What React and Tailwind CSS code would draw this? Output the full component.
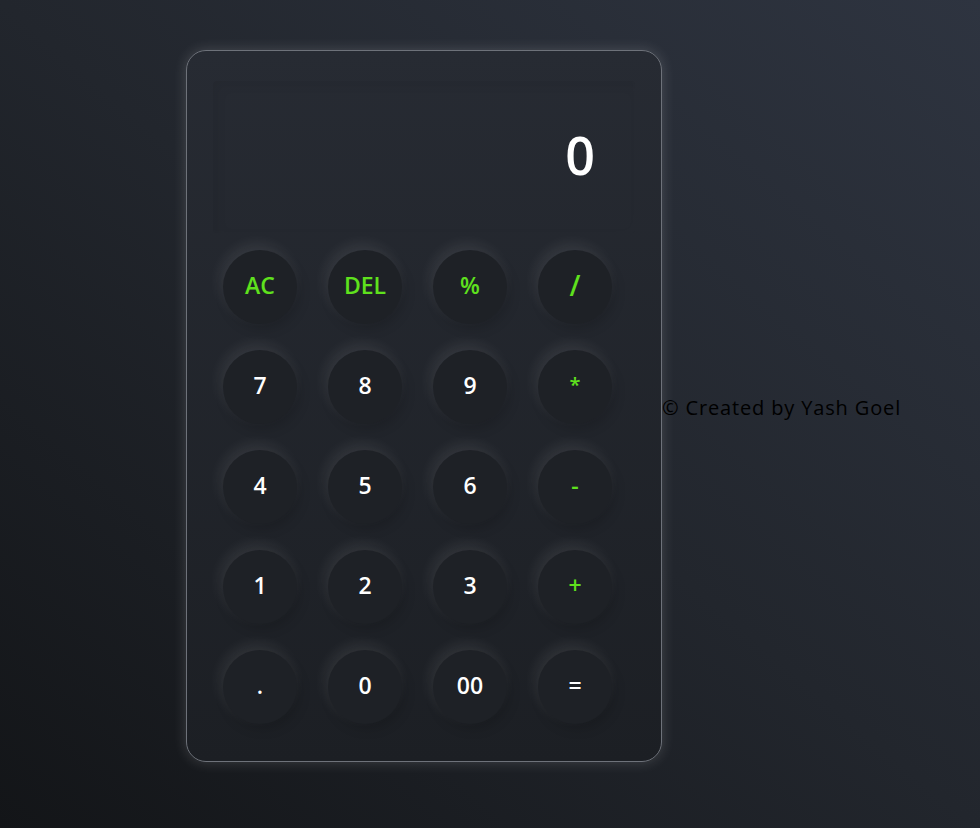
import React, { useState } from "react";

const keys = [
  { label: "AC", op: true },
  { label: "DEL", op: true },
  { label: "%", op: true },
  { label: "/", op: true, big: true },
  { label: "7" },
  { label: "8" },
  { label: "9" },
  { label: "*", op: true, small: true },
  { label: "4" },
  { label: "5" },
  { label: "6" },
  { label: "-", op: true },
  { label: "1" },
  { label: "2" },
  { label: "3" },
  { label: "+", op: true },
  { label: "." },
  { label: "0" },
  { label: "00" },
  { label: "=" },
];

export default function App() {
  const [value, setValue] = useState("0");

  const press = (k) => {
    if (k === "AC") return setValue("0");
    if (k === "DEL") return setValue((v) => (v.length > 1 ? v.slice(0, -1) : "0"));
    if (k === "=") {
      try {
        // eslint-disable-next-line no-new-func
        const r = Function(`return (${value.replace(/%/g, "/100")})`)();
        setValue(String(r));
      } catch {
        setValue("Error");
      }
      return;
    }
    setValue((v) => (v === "0" && k !== "." ? k : v + k));
  };

  return (
    <div
      className="min-h-screen w-full bg-[linear-gradient(to_bottom_left,#2e3440,#22262d_50%,#131518)] pt-[50px] pl-[186px] flex items-start"
      style={{ fontFamily: "'Open Sans', 'Liberation Sans', sans-serif" }}
    >
      {/* Calculator */}
      <div className="w-[476px] h-[712px] rounded-[20px] border border-[#6e727a] bg-[linear-gradient(to_bottom,#272b33,#1c1f24)] shadow-[0_0_14px_rgba(255,255,255,0.16)] px-[26px] pt-[30px] shrink-0">
        {/* Display */}
        <div className="h-[152px] rounded-[4px] shadow-[inset_4px_4px_12px_rgba(0,0,0,0.06),inset_-4px_-4px_12px_rgba(255,255,255,0.01)] flex items-center justify-end pr-[40px] pb-[4px]">
          <span className="text-[52px] font-semibold text-white leading-none">
            {value}
          </span>
        </div>

        {/* Keys */}
        <div className="mt-[17px] grid grid-cols-[74px_74px_74px_74px] gap-x-[31px] gap-y-[26px] pl-[10px]">
          {keys.map((k) => (
            <button
              key={k.label}
              onClick={() => press(k.label)}
              className={`w-[74px] h-[74px] rounded-full bg-[#1e2126] shadow-[-3px_-6px_14px_rgba(255,255,255,0.085),3px_5px_12px_rgba(0,0,0,0.15)] flex items-center justify-center pb-[4px] font-semibold leading-none ${
                k.op ? "text-[#5fe11d]" : "text-white"
              } ${k.big ? "text-[28px] font-medium" : k.small ? "text-[20px]" : "text-[23px]"}`}
            >
              {k.label}
            </button>
          ))}
        </div>
      </div>

      {/* Footer */}
      <div className="self-center mt-[-62px] text-[20px] tracking-[0.85px] text-black whitespace-nowrap">
        © Created by Yash Goel
      </div>
    </div>
  );
}
